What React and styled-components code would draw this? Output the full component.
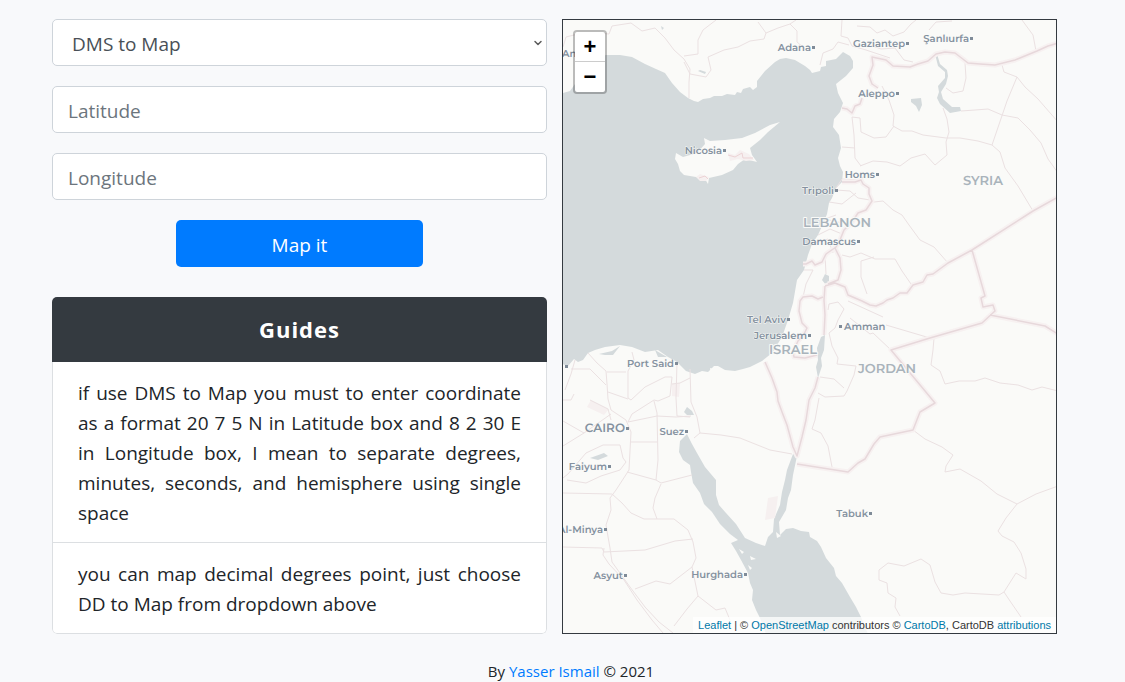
import React, { useState } from 'react';
import styled, { createGlobalStyle } from 'styled-components';
import { ChevronDown } from 'lucide-react';

const GlobalStyle = createGlobalStyle`
  *, *::before, *::after { box-sizing: border-box; }
  body {
    margin: 0;
    background: #f8f9fb;
    color: #212529;
    font-family: "Segoe UI", "Open Sans", "Noto Sans", sans-serif;
    font-size: 19px;
    line-height: 30px;
  }
`;

const Page = styled.main`
  display: grid;
  grid-template-columns: 1fr 1fr;
  gap: 15px;
  padding: 19px 68px 0 52px;
`;

const Column = styled.div`
  display: flex;
  flex-direction: column;
  gap: 30px;
  min-width: 0;
`;

const Form = styled.form`
  display: flex;
  flex-direction: column;
  gap: 20px;
`;

const Field = styled.div`
  display: grid;
  align-items: center;
`;

const Control = styled.input`
  grid-area: 1 / 1;
  width: 100%;
  height: 47px;
  padding: 2px 15px 0;
  border: 1px solid #ced4da;
  border-radius: 5px;
  background: #fff;
  color: #495057;
  font: inherit;
  appearance: none;
  &::placeholder { color: #6c757d; opacity: 1; }
`;

const Select = styled(Control)`
  padding: 2px 19px 0;
`;

const Arrow = styled(ChevronDown)`
  grid-area: 1 / 1;
  justify-self: end;
  margin-right: 3px;
  color: #5c5c5c;
  pointer-events: none;
`;

const SubmitButton = styled.button`
  align-self: center;
  width: 50%;
  height: 47px;
  padding: 2px 0 0;
  border: 0;
  border-radius: 5px;
  background: #007bff;
  color: #fff;
  font: inherit;
  cursor: pointer;
`;

const Card = styled.section`
  border-radius: 5px;
  background: #fff;
  overflow: hidden;
`;

const CardTitle = styled.h2`
  margin: 0;
  padding: 17px 0 18px;
  background: #343a40;
  color: #fff;
  font-size: 22px;
  font-weight: 700;
  line-height: 30px;
  letter-spacing: 1px;
  text-align: center;
`;

const GuideList = styled.ul`
  margin: 0;
  padding: 0;
  border: 1px solid #dcdfe2;
  border-top: 0;
  border-radius: 0 0 5px 5px;
  list-style: none;
`;

const Guide = styled.li`
  padding: 16px 25px 14px;
  text-align: justify;
  & + & { border-top: 1px solid #dcdfe2; }
`;

const MapFrame = styled.section`
  position: relative;
  min-height: 400px;
  border: 1px solid #343a40;
  background: #fafaf8;
  overflow: hidden;
`;

const MapCanvas = styled.svg`
  position: absolute;
  inset: 0;
  width: 100%;
  height: 100%;
`;

const ZoomBar = styled.div`
  position: absolute;
  top: 10px;
  left: 10px;
  display: flex;
  flex-direction: column;
  border: 2px solid rgba(0, 0, 0, 0.25);
  border-radius: 4px;
  background: #fff;
  background-clip: padding-box;
`;

const ZoomButton = styled.button`
  width: 30px;
  height: 30px;
  padding: 0;
  border: 0;
  background: none;
  color: #000;
  font: bold 22px/30px "Liberation Sans", Arial, sans-serif;
  cursor: pointer;
  &:first-child { border-bottom: 1px solid #ccc; }
`;

const Attribution = styled.div`
  position: absolute;
  right: 0;
  bottom: 0;
  padding: 0 5px;
  background: rgba(255, 255, 255, 0.75);
  color: #333;
  font: 11px/16px "Liberation Sans", Arial, sans-serif;
  white-space: nowrap;
`;

const Link = styled.a`
  color: ${(p) => p.$color || '#007bff'};
  text-decoration: none;
`;

const Footer = styled.footer`
  margin-top: 27px;
  padding-left: 17px;
  font-size: 15px;
  line-height: 20px;
  text-align: center;
`;

const Place = styled.text`
  fill: ${(p) => (p.$country ? '#a9b3bb' : '#84919f')};
  stroke: #fafaf8;
  stroke-width: ${(p) => (p.$country ? 2 : 1)}px;
  stroke-linejoin: round;
  paint-order: stroke;
  text-rendering: geometricPrecision;
  font-family: Montserrat, Inter, sans-serif;
  font-size: ${(p) => p.$size}px;
  font-weight: 600;
`;

const SEA = [
  'M560 94L570 91L575 84L583 69L592 59L606 55L620 55L632 57L645 64L656 69L665 73L672 83L680 92L688 98L694 101L698 102L703 99L710 98L714 96L722 96L727 94L735 95L737 92L741 93L743 89L750 87L753 90L757 87L757 81L765 71L775 62L780 59L786 58L795 60L805 66L810 70L812 73L820 71L821 67L826 66L826 61L836 59L843 52L850 56L853 61L853 68L846 76L836 84L838 93L843 103L840 112L834 119L833 127L839 135L841 148L838 158L840 166L843 172L842 182L836 188L832 198L829 203L827 214L823 224L818 235L812 244L808 255L804 270L797 280L793 303L788 320L782 337L772 353L762 361L750 367L743 369L735 371L725 370L718 366L714 366L708 372L702 371L695 374L686 371L677 362L668 357L658 350L645 352L632 347L620 345L605 347L595 350L588 353L583 360L578 362L574 359L568 366L560 363Z',
  'M687 434L680 441L679 452L683 460L690 465L691 472L693 483L700 493L704 504L712 512L720 524L730 534L738 540L731 543L736 551L741 560L748 573L750 583L753 590L752 600L756 610L760 618L766 634H868L861 617L856 607L850 597L842 583L836 576L834 568L826 558L821 547L817 541L810 537L809 532L801 531L793 528L786 529L780 535L779 522L786 510L788 498L791 490L793 475L797 456L793 454L787 470L785 480L782 492L780 505L774 519L773 532L768 537L765 546L756 543L745 538L736 524L726 513L719 505L716 495L716 480L705 467L697 453L692 444Z',
  'M825 274L829 276L829 283L826 285L822 280ZM821 337L825 335L824 350L821 358L822 366L818 378L816 367L818 360L817 348Z',
  'M687 407L684 412L687 415L694 415L692 411ZM599 354L612 351L620 346L613 355L605 355ZM590 458L604 453L608 456L598 460ZM911 99L921 98L922 105L919 112L916 106L911 102ZM938 86L939 92L937 98L940 104L950 113L961 111L960 107L952 107L943 99L941 92L946 84L948 76L947 70L940 64L937 54L935 54L938 66L945 72L945 78Z',
  'M655 350L667 357L658 357ZM700 70L706 72L705 74L698 71ZM661 26L664 28L662 30Z',
];

const LAND = [
  'M780 122L770 125L755 133L742 138L725 140L710 141L704 138L705 144L697 153L683 157L676 153L675 159L678 164L680 171L684 175L696 177L705 179L708 184L709 178L722 175L733 170L738 164L745 159L757 162L752 155L750 148L760 140L768 132Z',
  'M739 549L744 552L742 554ZM750 556L756 559L751 560ZM748 565L752 568L750 570ZM776 532L781 536L777 538ZM710 368L717 370L711 374Z',
];

const STATE_BORDERS = [
  'M1058 43L1048 46L1037 51L1015 60L995 65L980 64L968 63L955 53L945 52L936 54L928 61L918 64L910 67L893 66L886 60L872 57L873 65L869 76L872 84L878 88',
  'M862 98L860 104L855 106L852 113L847 109L842 108',
  'M842 182L855 182L861 180L863 184L869 188L869 194L872 201L866 210L858 213L852 222L844 230L840 240L836 247L826 254L822 262L815 265L812 261L806 264L803 264',
  'M825 286L835 283L845 287L848 295L862 301L870 305L876 306L883 303L887 300L893 298L900 293L907 293L913 285L923 282L927 275L933 274L948 263L972 250L1033 211L1058 197',
  'M972 250L985 296L981 298L983 307L993 305L995 311L982 323L930 338L891 350L935 403L920 412L913 430L880 437L874 444L865 459L858 463L848 472L797 464',
  'M990 315L1045 326L1058 334',
  'M765 362L772 378L777 392L778 401L782 412L787 425L793 447L797 456L802 437L806 420L809 400L815 388L818 377M824 335L825 315L824 300L825 286',
  'M823 297L818 299L812 296L803 297L800 301L799 311L802 323L807 328L804 334L798 341L793 352L794 357L805 358L817 355',
  'M835 248L840 258L841 270L838 280L828 284',
];

const REGION_BORDERS = [
  'M563 47L566 37L578 34L598 33L609 34L612 26L631 23L642 31L655 28L665 38L674 50L684 59L690 69L689 82L689 98M684 56L698 54L698 40L703 30L716 20M684 62L690 74L706 77L711 70L708 57L724 50L738 47L750 41L764 39L766 33L778 28L790 24L797 31L797 42L804 48',
  'M766 33L758 22M790 24L796 20M842 20L841 36L848 38L852 46L866 50L890 58M849 45L838 42L833 49L823 53L820 65M857 26L870 27L877 33L885 30L893 36L904 32L911 24L916 20M870 45L881 49L895 48L904 60L913 62M929 30L936 22L952 21',
  'M1022 20L1033 35L1036 51M1002 65L1004 72L1017 77L1025 87L1038 99L1058 122M1017 77L1007 101L992 145',
  'M965 63L966 78L963 91L953 93L946 88M882 86L889 100L894 115L893 126L902 131L912 131L923 135L946 138L960 138L978 141L992 145L1000 152L1005 168L1018 186L1033 211',
  'M961 111L975 110L988 109L1002 115L1018 118L1030 130L1041 143L1048 159L1058 173M943 108L947 119L949 132L946 142L947 155L935 165L925 154L911 158L900 166L887 162L873 161L860 166',
  'M894 126L886 137L874 138L861 132L860 118L852 117L854 135L855 158L861 166',
  'M842 147L855 148',
  'M874 202L883 201L893 210L902 215L909 225L920 240L934 247L948 263M842 255L850 257L861 253L875 259L895 259L902 271L911 284M861 261L861 277L867 294M861 261L874 257',
  'M836 190L850 191L858 198L870 200M829 202L842 204L856 193M836 215L825 219L842 223L849 217M818 235L830 229L842 234M815 243L828 239L833 253M836 188L842 179L858 180L865 176M804 270L813 270L806 284L803 297M825 255L826 274',
  'M828 310L829 304L838 302L844 309L838 320L835 328L829 333L832 346L838 358L837 364L856 366L854 375L847 391L844 396L825 397L818 393',
  'M820 377L834 379L844 388M848 301L883 317M850 318L870 334L873 333L891 350M886 325L930 338M934 338L933 350L931 365L940 371L945 384L959 381L975 381L985 378L1000 383L1018 385L1032 390L1042 387L1058 391',
  'M913 430L925 439L942 447L953 455L946 466L945 472L960 469L981 481L997 494L1017 504L1036 494L1058 486M1017 504L1006 518L998 531L1002 536L1014 542L1021 553L1026 569L1026 579L1016 573L1004 592L1010 601L1021 617M1004 592L999 595L965 593L953 595L941 593L935 582L930 565L921 559L904 566L888 563L879 570L879 580L887 583L888 593L896 598L895 607L900 616',
  'M819 398L815 420L812 429L821 433L828 446L832 467',
  'M690 369L691 402L697 417L700 433L721 435L740 438L770 450L792 454M700 433L694 438M677 362L676 398L677 416L690 417M672 384L680 383L690 378',
  'M588 353L597 363L606 371L607 384L608 399L611 410L626 420L631 432L629 470L616 490L610 498L611 510L606 525L610 548L612 562L630 587L645 607L659 622L673 633M575 360L571 374L565 390M571 369L590 369L606 385M563 400L571 400L574 394M632 352L634 360L628 371L628 398L631 400L645 387L665 377L672 377L670 396L658 401L654 400L632 414L628 422L657 416L676 417L691 416M607 372L626 372M608 392L628 399M590 400L608 409L611 420',
  'M563 421L584 433L611 414',
  'M563 446L584 433M654 401L657 413L658 460L656 480M631 442L657 442M627 472L656 480L661 483L692 475M563 478L568 474L586 453L603 445L620 445L623 458L626 462L620 470L601 476L586 483L567 480M563 493L612 494L622 503L631 513L644 519L674 519L688 530L693 542L696 558L692 567L698 596L716 610L725 608L730 620M661 484L655 498L653 508L657 519M563 547L602 548L604 552L645 550L675 541L693 539M604 548L603 555L609 564L624 580L637 600L652 620L663 633M692 567L670 584L656 581L635 589M698 596L687 609L674 626',
];

const BUILT_UP = [
  'M728 153L735 155L740 150L749 154L754 160L746 161L738 159L730 161ZM696 177L700 174L709 177L706 181L700 181Z',
  'M591 400L609 409L604 415L587 407ZM672 384L680 383L679 397L672 396ZM768 498L778 496L775 518L765 520Z',
];

const CITIES = [
  { name: 'Adana', x: 813, y: 47 },
  { name: 'Gaziantep', x: 907, y: 43 },
  { name: 'Şanlıurfa', x: 971, y: 38 },
  { name: 'Aleppo', x: 897, y: 93 },
  { name: 'Nicosia', x: 724, y: 150 },
  { name: 'Homs', x: 877, y: 174 },
  { name: 'Tripoli', x: 836, y: 190 },
  { name: 'Damascus', x: 858, y: 241 },
  { name: 'Tel Aviv', x: 788, y: 319 },
  { name: 'Jerusalem', x: 809, y: 335 },
  { name: 'Amman', x: 840, y: 326, after: true },
  { name: 'Port Said', x: 676, y: 363 },
  { name: 'CAIRO', x: 627, y: 428, size: 12 },
  { name: 'Suez', x: 686, y: 431 },
  { name: 'Faiyum', x: 609, y: 466 },
  { name: 'Tabuk', x: 870, y: 513 },
  { name: 'Al-Minya', x: 605, y: 529 },
  { name: 'Asyut', x: 625, y: 575 },
  { name: 'Hurghada', x: 745, y: 574 },
];

const COUNTRIES = [
  { name: 'SYRIA', x: 983, y: 185 },
  { name: 'LEBANON', x: 837, y: 227 },
  { name: 'ISRAEL', x: 793, y: 354 },
  { name: 'JORDAN', x: 887, y: 373 },
];

function BaseMap() {
  return (
    <MapCanvas viewBox="563 20 493 613" preserveAspectRatio="xMidYMid slice" role="img" aria-label="Map of the eastern Mediterranean">
      <path d={SEA.join('')} fill="#d4dadc" />
      <path d={LAND.join('')} fill="#fafaf8" />
      <path d={BUILT_UP.join('')} fill="#f6f0f0" />
      <path d={REGION_BORDERS.join('')} fill="none" stroke="#ebe1e2" strokeWidth="1" strokeLinejoin="round" />
      <path d="M728 155L735 157L742 153L743 158L753 158M699 178L705 176L708 179" fill="none" stroke="#ecd3d5" strokeWidth="1" />
      <path d={STATE_BORDERS.join('')} fill="none" stroke="#f7f1f1" strokeWidth="5" strokeLinejoin="round" />
      <path d={STATE_BORDERS.join('')} fill="none" stroke="#e7d8db" strokeWidth="1.5" strokeLinejoin="round" />
      {COUNTRIES.map((c) => (
        <Place key={c.name} $country $size={13} x={c.x} y={c.y} textAnchor="middle">{c.name}</Place>
      ))}
      <Place $size={10} x={562} y={57}>An</Place>
      <rect x="565" y="365" width="3" height="3" fill="#7f8b98" />
      {CITIES.map((c) => (
        <g key={c.name}>
          <Place
            $size={c.size || 10}
            x={c.after ? c.x + 4 : c.x - 2}
            y={c.y + 4}
            textAnchor={c.after ? 'start' : 'end'}
          >
            {c.name}
          </Place>
          <rect x={c.x - 1} y={c.y - 1} width="3" height="3" fill="#7f8b98" />
        </g>
      ))}
    </MapCanvas>
  );
}

export default function App() {
  const [mode, setMode] = useState('dms');
  return (
    <>
      <GlobalStyle />
      <Page>
        <Column>
          <Form onSubmit={(e) => e.preventDefault()}>
            <Field>
              <Select as="select" aria-label="Conversion" value={mode} onChange={(e) => setMode(e.target.value)}>
                <option value="dms">DMS to Map</option>
                <option value="dd">DD to Map</option>
              </Select>
              <Arrow size={12} strokeWidth={3} />
            </Field>
            <Field>
              <Control type="text" aria-label="Latitude" placeholder="Latitude" />
            </Field>
            <Field>
              <Control type="text" aria-label="Longitude" placeholder="Longitude" />
            </Field>
            <SubmitButton type="submit">Map it</SubmitButton>
          </Form>
          <Card>
            <CardTitle>Guides</CardTitle>
            <GuideList>
              <Guide>
                if use DMS to Map you must to enter coordinate as a format 20 7 5 N in Latitude box and 8 2 30 E
                in Longitude box, I mean to separate degrees, minutes, seconds, and hemisphere using single space
              </Guide>
              <Guide>you can map decimal degrees point, just choose DD to Map from dropdown above</Guide>
            </GuideList>
          </Card>
        </Column>
        <MapFrame>
          <BaseMap />
          <ZoomBar>
            <ZoomButton type="button" aria-label="Zoom in">+</ZoomButton>
            <ZoomButton type="button" aria-label="Zoom out">−</ZoomButton>
          </ZoomBar>
          <Attribution>
            <Link $color="#0078a8" href="#leaflet">Leaflet</Link> | © <Link $color="#0078a8" href="#osm">OpenStreetMap</Link>{' '}
            contributors © <Link $color="#0078a8" href="#cartodb">CartoDB</Link>, CartoDB{' '}
            <Link $color="#0078a8" href="#attributions">attributions</Link>
          </Attribution>
        </MapFrame>
      </Page>
      <Footer>
        By <Link href="#author">Yasser Ismail</Link> © 2021
      </Footer>
    </>
  );
}
